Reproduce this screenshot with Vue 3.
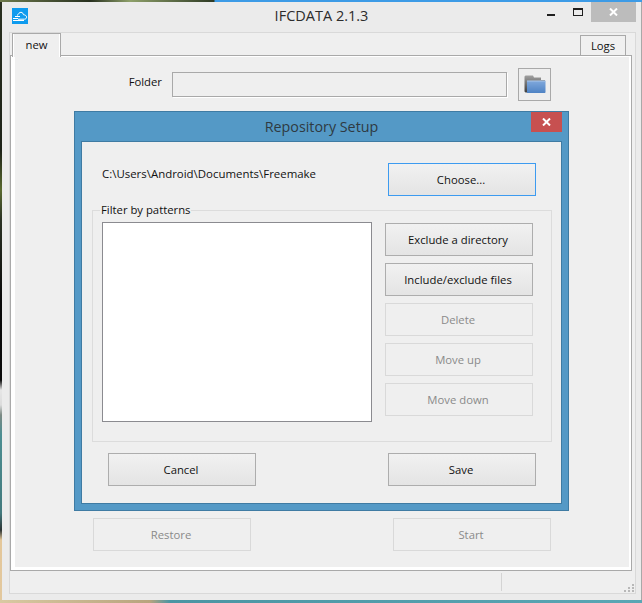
<script setup>
const sideButtons = [
  { label: 'Exclude a directory', disabled: false },
  { label: 'Include/exclude files', disabled: false },
  { label: 'Delete', disabled: true },
  { label: 'Move up', disabled: true },
  { label: 'Move down', disabled: true }
]
</script>

<template>
  <div class="desktop">
    <div class="window">
      <header class="titlebar">
        <div class="title-left">
          <svg class="app-icon" width="16" height="16" viewBox="0 0 16 16">
            <rect width="16" height="16" fill="#0e9bee" />
            <path d="M5 7.5C6 7 6.3 6 7 5.2C8 4 10 4 10.8 5.2C11.2 5.8 11.2 6.4 11.6 6.8C13 6.8 14.6 7.6 14.6 9.2C14.6 10.4 13.6 11.2 12.4 11.2H6" fill="none" stroke="#fff" stroke-width="1" />
            <path d="M3 8.5H8M1 10.5H6M1 12.5H12" fill="none" stroke="#fff" stroke-width="1" />
          </svg>
        </div>
        <div class="app-title">IFCDATA 2.1.3</div>
        <div class="controls">
          <span class="minimize"></span>
          <span class="maximize"></span>
          <span class="close-grey">
            <svg width="9" height="8" viewBox="0 0 9 8"><path d="M1 0.5L8 7.5M8 0.5L1 7.5" stroke="#fff" stroke-width="2" /></svg>
          </span>
        </div>
      </header>

      <div class="frame">
        <div class="tabs">
          <div class="tab tab-active">new</div>
          <div class="tab tab-logs">Logs</div>
        </div>

        <div class="panel">
          <div class="panel-inner">
            <div class="folder-row">
              <label class="folder-label">Folder</label>
              <div class="folder-input"></div>
              <button class="folder-btn">
                <svg width="22" height="19" viewBox="0 0 22 19">
                  <defs>
                    <linearGradient id="backG" x1="0" y1="0" x2="0" y2="1">
                      <stop offset="0" stop-color="#a0a0a0" />
                      <stop offset="1" stop-color="#3e3e3e" />
                    </linearGradient>
                    <linearGradient id="frontG" x1="0" y1="0" x2="0" y2="1">
                      <stop offset="0" stop-color="#7fa8dc" />
                      <stop offset="1" stop-color="#4f83c4" />
                    </linearGradient>
                  </defs>
                  <path d="M0.5 1.5L1.5 0.5H9L10 2.5H17V5H21V17.5H1.5L0.5 16.5Z" fill="url(#backG)" />
                  <path d="M3 6H21.5V17.5L20.5 18H3Z" fill="url(#frontG)" />
                  <path d="M3 6H21.5" stroke="#a9c6ea" stroke-width="1" />
                </svg>
              </button>
            </div>

            <div class="action-row">
              <button class="btn btn-wide" disabled>Restore</button>
              <button class="btn btn-wide" disabled>Start</button>
            </div>

            <section class="dialog">
              <div class="dialog-head">
                <span class="dialog-title">Repository Setup</span>
                <span class="close-red">
                  <svg width="9" height="8" viewBox="0 0 9 8"><path d="M1 0.5L8 7.5M8 0.5L1 7.5" stroke="#fff" stroke-width="2" /></svg>
                </span>
              </div>
              <div class="dialog-body">
                <div class="path-row">
                  <span class="path-text">C:\Users\Android\Documents\Freemake</span>
                  <button class="btn btn-focus">Choose...</button>
                </div>

                <div class="filter-group">
                  <span class="legend">Filter by patterns</span>
                  <div class="listbox"></div>
                  <div class="side-buttons">
                    <button v-for="b in sideButtons" :key="b.label" class="btn" :disabled="b.disabled">{{ b.label }}</button>
                  </div>
                </div>

                <div class="footer-row">
                  <button class="btn">Cancel</button>
                  <button class="btn">Save</button>
                </div>
              </div>
            </section>
          </div>
        </div>

        <footer class="statusbar">
          <span class="status-sep"></span>
          <svg class="grip" width="10" height="8" viewBox="0 0 10 8" fill="#b8b8b8">
            <rect x="8" y="0" width="2" height="2" />
            <rect x="4" y="3" width="2" height="2" />
            <rect x="8" y="3" width="2" height="2" />
            <rect x="0" y="6" width="2" height="2" />
            <rect x="4" y="6" width="2" height="2" />
            <rect x="8" y="6" width="2" height="2" />
          </svg>
        </footer>
      </div>
    </div>
  </div>
</template>

<style>
html, body { margin: 0; padding: 0; }
</style>

<style scoped>
* { box-sizing: border-box; }

.desktop {
  width: 642px;
  height: 603px;
  padding: 2px 0 3px 2px;
  overflow: hidden;
  font-family: "Open Sans", "Noto Sans", sans-serif;
  font-size: 11.3px;
  color: #111;
  background:
    linear-gradient(90deg, #6e7a4c 0, #27301f 90px, #8ea06a 130px, #2e3a24 214px, #3d9be6 215px) 0 0 / 100% 2px no-repeat,
    linear-gradient(90deg, #d9c9a2 0, #b8a47e 150px, #4b95a3 170px, #5aa6b4 642px) 0 600px / 100% 3px no-repeat,
    linear-gradient(180deg, #2a3020 0, #1d2218 150px, #5a6a30 190px, #2b3224 220px, #0a0a0a 300px, #0b0b0b 380px, #e6e6e6 390px, #dcdcdc 405px, #7c8a84 415px, #4c8e92 435px, #43797d 513px, #2c3434 530px, #e4c79a 540px, #e2c89e 603px);
}

.window {
  width: 640px;
  height: 598px;
  display: flex;
  flex-direction: column;
  background: #ebebeb;
  border-right: 1px solid #a8a8a8;
}

.titlebar {
  height: 30px;
  flex: none;
  display: grid;
  grid-template-columns: 1fr auto 1fr;
}
.title-left { padding: 6px 0 0 10px; }
.app-icon { display: block; }
.app-title {
  font-size: 14.5px;
  line-height: 28px;
  color: #2c2c2c;
}
.controls {
  display: flex;
  justify-content: flex-end;
  align-items: flex-start;
  padding-right: 5px;
}
.minimize {
  width: 8px;
  height: 2px;
  margin-top: 12px;
  background: #1f1f1f;
}
.maximize {
  width: 10px;
  height: 8px;
  margin: 6px 0 0 18px;
  border: 1px solid #1f1f1f;
  border-top-width: 2px;
}
.close-grey {
  width: 45px;
  height: 20px;
  margin-left: 8px;
  display: flex;
  align-items: center;
  justify-content: center;
  background: #bcbcbc;
}

.frame {
  flex: 1;
  margin: 0 5px 6px 7px;
  display: flex;
  flex-direction: column;
  background: #efefef;
  border: 1px solid #d9d9d9;
}

.tabs {
  height: 22px;
  flex: none;
  display: flex;
  justify-content: space-between;
  align-items: flex-start;
  padding: 0 9px 0 2px;
}
.tab { text-align: center; }
.tab-active {
  position: relative;
  z-index: 1;
  width: 49px;
  height: 24px;
  line-height: 22px;
  background: #efefef;
  border: 1px solid #a9a9a9;
  border-bottom: 0;
  box-shadow: inset 1px 0 0 #fff, inset -1px 0 0 #fff;
}
.tab-logs {
  width: 46px;
  height: 20px;
  margin-top: 2px;
  line-height: 20px;
  background: #f0f0f0;
  border: 1px solid #a9a9a9;
  border-bottom: 0;
}

.panel {
  height: 516px;
  flex: none;
  margin-right: 3px;
  border: 1px solid #a9a9a9;
  background: #fff;
  padding: 1px 2px 3px 4px;
}
.panel-inner {
  position: relative;
  height: 100%;
  padding-top: 11px;
  background: #efefef;
}

.folder-row { display: flex; align-items: center; height: 33px; }
.folder-label { width: 147px; margin-top: -6px; text-align: right; }
.folder-input {
  width: 335px;
  height: 25px;
  margin-left: 10px;
  background: #efefef;
  border: 1px solid #a9a9a9;
  box-shadow: 1px 1px 0 #fff;
}
.folder-btn {
  width: 33px;
  height: 33px;
  margin-left: 11px;
  padding: 0;
  display: flex;
  align-items: center;
  justify-content: center;
  background: #eeeeee;
  border: 1px solid #a9a9a9;
}

.btn {
  width: 148px;
  height: 33px;
  padding: 0 2px 0 0;
  font: inherit;
  color: #111;
  background: linear-gradient(180deg, #f1f1f1, #e4e4e4);
  border: 1px solid #adadad;
}
.btn:disabled {
  color: #8a8a8a;
  background: #efefef;
  border-color: #d9d9d9;
}
.btn-focus { border-color: #3d9bf0; }
.btn-wide { width: 158px; }

.action-row {
  display: flex;
  gap: 142px;
  margin-top: 417px;
  padding-left: 78px;
}

.dialog {
  position: absolute;
  left: 59px;
  top: 54px;
  width: 495px;
  height: 400px;
  display: flex;
  flex-direction: column;
  background: #5499c6;
  border: 1px solid #3f7ba3;
}
.dialog-head {
  position: relative;
  height: 29px;
  flex: none;
  text-align: center;
}
.dialog-title {
  font-size: 14.3px;
  line-height: 29px;
  color: #2f3a42;
}
.close-red {
  position: absolute;
  top: 0;
  right: 6px;
  width: 31px;
  height: 20px;
  display: flex;
  align-items: center;
  justify-content: center;
  background: #c75050;
}
.dialog-body {
  flex: 1;
  margin: 0 6px 6px;
  padding: 21px 0 0;
  background: #efefef;
  border: 1px solid #3f7ba3;
}

.path-row {
  display: flex;
  justify-content: space-between;
  padding: 0 25px 0 20px;
  height: 33px;
}
.path-text { margin-top: 2px; line-height: 18px; font-size: 11.45px; }

.filter-group {
  position: relative;
  display: flex;
  align-items: flex-start;
  gap: 13px;
  height: 232px;
  margin: 14px 9px 0 10px;
  padding: 11px 0 0 9px;
  border: 1px solid #dcdcdc;
}
.legend {
  position: absolute;
  top: -8px;
  left: 7px;
  padding: 0 1px;
  line-height: 14px;
  background: #efefef;
}
.listbox {
  width: 270px;
  height: 200px;
  background: #fff;
  border: 1px solid #8b8b90;
}
.side-buttons {
  display: flex;
  flex-direction: column;
  gap: 7px;
  margin-top: 1px;
}

.footer-row {
  display: flex;
  justify-content: space-between;
  margin-top: 11px;
  padding: 0 25px 0 26px;
}

.statusbar {
  position: relative;
  flex: 1;
  padding-top: 2px;
}
.status-sep {
  display: block;
  width: 1px;
  height: 18px;
  margin-left: 491px;
  background: #d4d4d4;
}
.grip {
  position: absolute;
  right: 1px;
  bottom: 1px;
}
</style>
